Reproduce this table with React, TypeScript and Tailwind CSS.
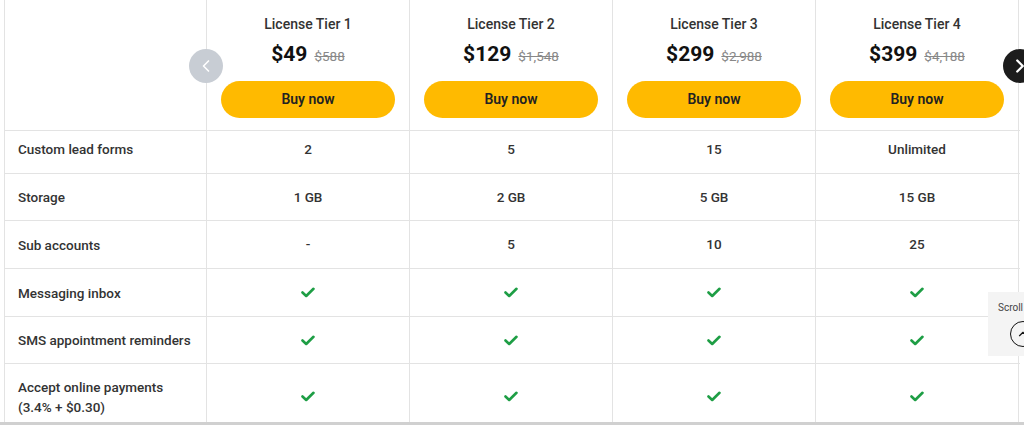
import { ChevronLeft, ChevronRight, ChevronUp } from 'lucide-react'

const TIERS = [
  { name: 'License Tier 1', price: '$49', was: '$588' },
  { name: 'License Tier 2', price: '$129', was: '$1,548' },
  { name: 'License Tier 3', price: '$299', was: '$2,988' },
  { name: 'License Tier 4', price: '$399', was: '$4,188' },
]

type Cell = string | true

const ROWS: { label: string[]; values: Cell[]; h: string; pad: string }[] = [
  { label: ['Custom lead forms'], values: ['2', '5', '15', 'Unlimited'], h: 'h-[43px]', pad: 'pb-[6px]' },
  { label: ['Storage'], values: ['1 GB', '2 GB', '5 GB', '15 GB'], h: 'h-[47px]', pad: '' },
  { label: ['Sub accounts'], values: ['-', '5', '10', '25'], h: 'h-[48px]', pad: '' },
  { label: ['Messaging inbox'], values: [true, true, true, true], h: 'h-[48px]', pad: '' },
  { label: ['SMS appointment reminders'], values: [true, true, true, true], h: 'h-[47px]', pad: '' },
  { label: ['Accept online payments', '(3.4% + $0.30)'], values: [true, true, true, true], h: 'h-[60px]', pad: 'pt-[6px]' },
]

function Tick() {
  return (
    <svg width="14" height="11" viewBox="0 0 14 11" fill="none">
      <path d="M1.5 5.5 L5.2 9 L12.5 1.8" stroke="#1e9e45" strokeWidth="2.6" strokeLinecap="round" strokeLinejoin="round" />
    </svg>
  )
}

export default function App() {
  return (
    <div className="relative w-[1024px] h-[425px] overflow-hidden bg-white font-['Roboto',sans-serif] text-[#333]">
      <div className="ml-[4px] w-[1016px] border-l border-[#e3e3e3]">
        {/* Header */}
        <div className="grid grid-cols-[202px_203px_203px_203px_203px] h-[131px] border-b border-[#e3e3e3]">
          <div className="border-r border-[#e3e3e3]" />
          {TIERS.map(t => (
            <div key={t.name} className="flex flex-col items-center border-r border-[#e3e3e3] pt-[16px] px-[14px]">
              <p className="text-[14px] font-medium text-[#333] leading-[16px]">{t.name}</p>
              <div className="flex items-baseline gap-[7px] mt-[9px] leading-[26px]">
                <span className="text-[21px] font-bold text-[#111]">{t.price}</span>
                <span className="text-[13.5px] text-[#888] line-through">{t.was}</span>
              </div>
              <button className="mt-[12px] w-full h-[37px] rounded-full bg-[#ffba00] text-[14px] font-semibold text-[#222]">
                Buy now
              </button>
            </div>
          ))}
        </div>

        {/* Feature rows */}
        {ROWS.map(r => (
          <div key={r.label[0]} className={`grid grid-cols-[202px_203px_203px_203px_203px] border-b border-[#e3e3e3] ${r.h}`}>
            <div className={`flex flex-col justify-center pl-[13px] border-r border-[#e3e3e3] text-[13.5px] font-medium leading-[20px] ${r.pad}`}>
              {r.label.map(l => <span key={l}>{l}</span>)}
            </div>
            {r.values.map((v, i) => (
              <div key={i} className={`flex items-center justify-center border-r border-[#e3e3e3] text-[13.5px] font-medium ${r.pad}`}>
                {v === true ? <Tick /> : v}
              </div>
            ))}
          </div>
        ))}
      </div>

      <div className="absolute left-0 right-0 top-[422px] h-[3px] bg-[#d0d0d0]" />

      {/* Carousel arrows */}
      <button className="absolute left-[189px] top-[49px] w-[34px] h-[34px] rounded-full bg-[#c8cdd4] flex items-center justify-center">
        <ChevronLeft className="w-[20px] h-[20px] text-white" strokeWidth={2} />
      </button>
      <button className="absolute left-[1003px] top-[49px] w-[34px] h-[34px] rounded-full bg-[#1c1c1c] flex items-center justify-center">
        <ChevronRight className="w-[22px] h-[22px] text-white" strokeWidth={2.5} />
      </button>

      {/* Scroll widget */}
      <div className="absolute left-[988px] top-[292px] w-[40px] h-[64px] bg-[#f4f4f4] flex flex-col items-start pl-[10px] pt-[10px]">
        <span className="text-[10px] text-[#444] leading-[12px]">Scroll</span>
        <div className="mt-[7px] ml-[12px] w-[26px] h-[26px] rounded-full border-[1.5px] border-[#111] flex items-center justify-center">
          <ChevronUp className="w-[14px] h-[14px] text-[#111]" strokeWidth={2} />
        </div>
      </div>
    </div>
  )
}
